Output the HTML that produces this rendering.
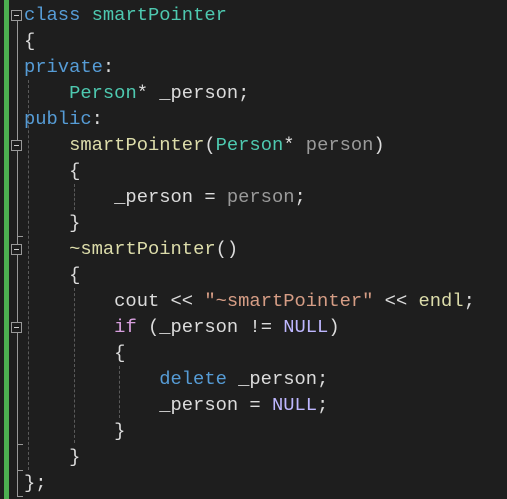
<!DOCTYPE html><html><head><style>
body{margin:0;background:#1e1e1e;width:507px;height:499px;overflow:hidden;position:relative}
.l{position:absolute;left:24px;height:26px;line-height:26px;font-family:"Liberation Mono",monospace;font-size:18.8px;color:#dcdcdc;white-space:pre}
.k{color:#569cd6}.t{color:#4ec9b0}.f{color:#dcdcaa}.p{color:#9a9a9a}.s{color:#d69d85}.c{color:#d8a0df}.m{color:#beb7ff}
.g{position:absolute;width:0;border-left:1px dashed #5a5a5a}
.fb{position:absolute;left:11px;width:9px;height:9px;border:1px solid #999;background:#1e1e1e}
.fb:after{content:"";position:absolute;left:2px;top:4px;width:5px;height:1px;background:#ccc}
.tk{position:absolute;left:17px;width:6px;height:1px;background:#999}
</style></head><body>
<div style="position:absolute;left:4px;top:0;width:5px;height:499px;background:#4caf50"></div>
<div style="position:absolute;left:17px;top:20px;width:1px;height:476px;background:#999"></div>
<div class="tk" style="top:236px"></div><div class="tk" style="top:444px"></div><div class="tk" style="top:470px"></div><div class="tk" style="top:496px"></div>
<div class="g" style="left:28px;top:80px;height:390px"></div>
<div class="g" style="left:74px;top:184px;height:26px"></div>
<div class="g" style="left:74px;top:288px;height:155px"></div>
<div class="g" style="left:119px;top:366px;height:52px"></div>
<div class="fb" style="top:10px"></div><div class="fb" style="top:140px"></div><div class="fb" style="top:244px"></div><div class="fb" style="top:322px"></div>
<div class="l" style="top:2px"><span class="k">class</span> <span class="t">smartPointer</span></div>
<div class="l" style="top:28px">{</div>
<div class="l" style="top:54px"><span class="k">private</span>:</div>
<div class="l" style="top:80px">    <span class="t">Person</span>* _person;</div>
<div class="l" style="top:106px"><span class="k">public</span>:</div>
<div class="l" style="top:132px">    <span class="f">smartPointer</span>(<span class="t">Person</span>* <span class="p">person</span>)</div>
<div class="l" style="top:158px">    {</div>
<div class="l" style="top:184px">        _person = <span class="p">person</span>;</div>
<div class="l" style="top:210px">    }</div>
<div class="l" style="top:236px">    <span class="f">~smartPointer</span>()</div>
<div class="l" style="top:262px">    {</div>
<div class="l" style="top:288px">        cout &lt;&lt; <span class="s">"~smartPointer"</span> &lt;&lt; <span class="f">endl</span>;</div>
<div class="l" style="top:314px">        <span class="c">if</span> (_person != <span class="m">NULL</span>)</div>
<div class="l" style="top:340px">        {</div>
<div class="l" style="top:366px">            <span class="k">delete</span> _person;</div>
<div class="l" style="top:392px">            _person = <span class="m">NULL</span>;</div>
<div class="l" style="top:418px">        }</div>
<div class="l" style="top:444px">    }</div>
<div class="l" style="top:470px">};</div>
</body></html>
